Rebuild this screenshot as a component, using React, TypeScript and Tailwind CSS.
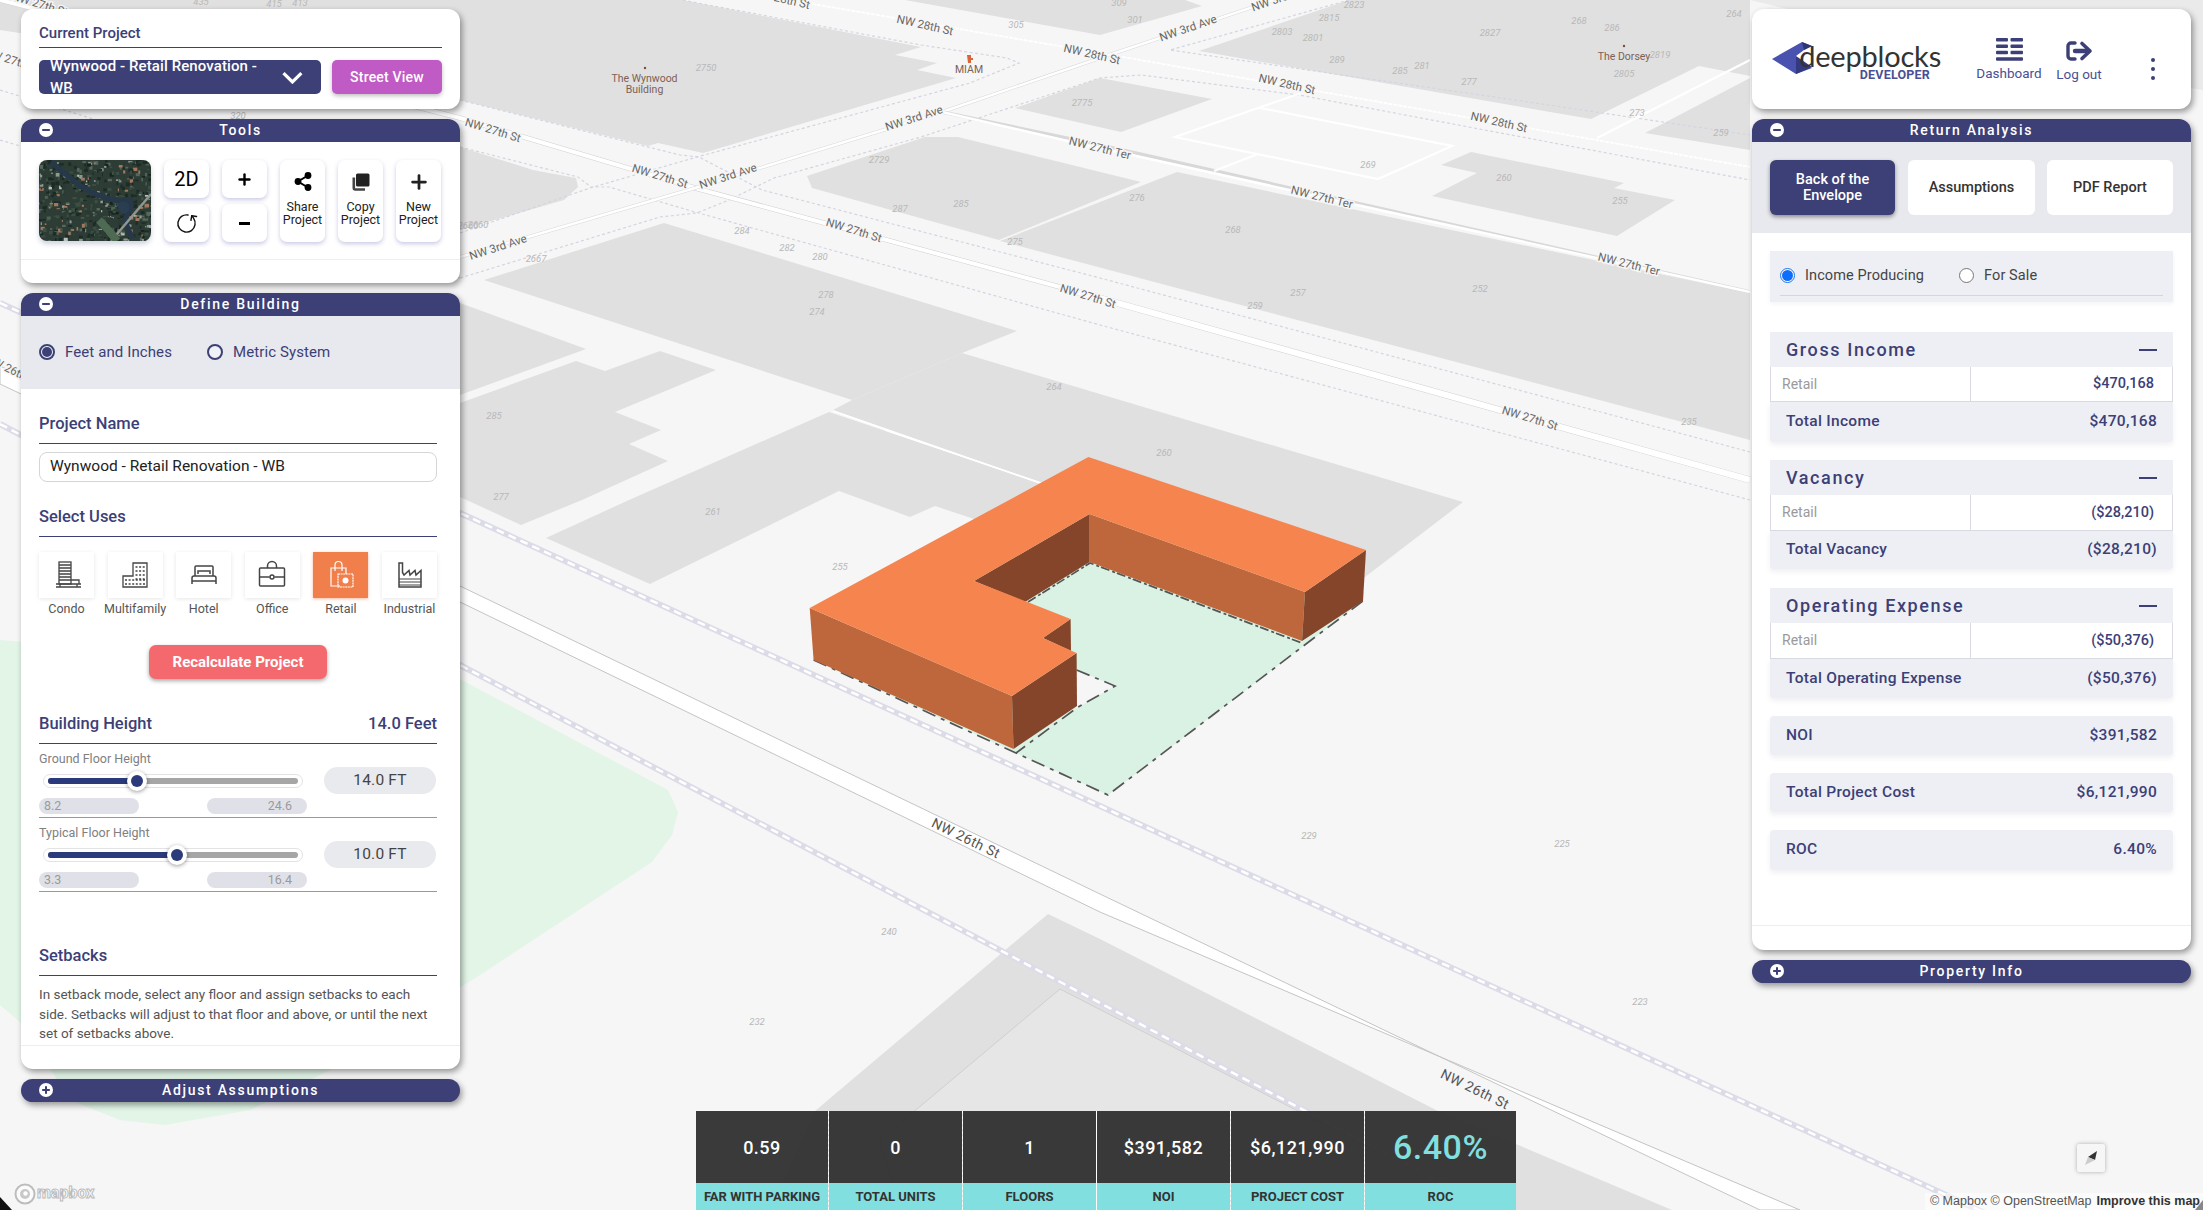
import React from "react";
import { RotateCw, Plus } from "lucide-react";

const NAVY = "#3c4076";

type Lbl = [string, number, number, number];
const streets: Lbl[] = [
  ["NW 27th St", 493, 130, 17], ["NW 27th St", 660, 176, 17], ["NW 3rd Ave", 728, 176, -18], ["NW 3rd Ave", 914, 118, -18],
  ["NW 3rd Ave", 498, 247, -18], ["NW 28th St", 925, 25, 13], ["NW 28th St", 1092, 54, 13], ["28th St", 792, 1, 13],
  ["NW 27th Ter", 1100, 148, 14], ["NW 27th St", 854, 230, 17], ["NW 27th St", 1088, 296, 17], ["NW 28th St", 1287, 84, 13],
  ["NW 28th St", 1499, 122, 13], ["NW 27th Ter", 1322, 197, 14], ["NW 27th Ter", 1629, 264, 14], ["NW 27th St", 1530, 418, 17],
  ["NW 3rd Ave", 1188, 28, -19], ["NW 3rd Ave", 1280, -2, -19], ["NW 27th St", 12, 60, 17],["NW 26th St", 12, 370, 26], ["NW 27th St", 40, 4, 17],
];
const wide: Lbl[] = [["NW 26th St", 966, 838, 26], ["NW 26th St", 1475, 1089, 26]];
const nums: [string, number, number][] = [
  ["2750", 706, 68], ["305", 1016, 25], ["2775", 1082, 103], ["2729", 879, 160], ["287", 900, 209], ["285", 961, 204], ["275", 1015, 242],
  ["284", 742, 231], ["282", 787, 248], ["280", 820, 257], ["2667", 536, 259], ["2660", 468, 226], ["278", 826, 295], ["274", 817, 312],
  ["264", 1054, 387], ["285", 494, 416], ["277", 501, 497], ["309", 1119, 3], ["301", 1135, 20], ["2823", 1354, 5], ["2815", 1329, 18],
  ["2803", 1282, 32], ["2801", 1313, 38], ["289", 1337, 60], ["285", 1400, 71], ["281", 1422, 66], ["277", 1469, 82], ["2827", 1490, 33],
  ["268", 1579, 21], ["286", 1612, 28], ["264", 1734, 14], ["2819", 1660, 55], ["2805", 1624, 74], ["273", 1637, 113], ["259", 1721, 133],
  ["269", 1368, 165], ["260", 1504, 178], ["255", 1620, 201], ["276", 1137, 198], ["268", 1233, 230], ["257", 1298, 293], ["259", 1255, 306],
  ["252", 1480, 289], ["235", 1689, 422], ["260", 1164, 453], ["261", 713, 512], ["255", 840, 567], ["240", 889, 932], ["232", 757, 1022],
  ["229", 1309, 836], ["225", 1562, 844], ["223", 1640, 1002], ["415", 274, 4], ["413", 300, 3], ["435", 201, 2], ["320", 238, 116], ["2660", 478, 225],
];
const blocks = [
  "0,0 617,0 682,0 921,47 895,55 937,63 917,70 956,78 703,153 658,143 648,146 460,100 0,30",
  "300,160 460,147 533,170 576,178 578,187 564,200 460,230 300,280",
  "484,280 664,223 1017,331 962,353 852,400",
  "807,176 925,137 958,137 1141,182 999,240 812,188",
  "1000,241 1177,172 1750,293 1750,440",
  "1015,108 1100,78 1212,99 1121,132",
  "905,0 1185,0 1202,6 1100,35",
  "1349,0 1199,51 1591,119 1699,66 1750,76 1750,0",
  "1645,133 1750,78 1750,150",
  "1471,152 1624,183 1614,188 1675,200 1617,236 1432,196 1477,173 1441,165",
  "460,303 586,349 460,395",
  "460,403 576,361 605,371 660,351 716,370 615,412 661,430 629,444 668,461 582,500 521,525 460,497",
  "629,500 829,412 1040,483 1100,520 974,519 935,506 910,517 839,491 650,584 546,538",
  "962,353 1463,502 1365,577 1200,560 1041,483 833,410 852,400",
  "1048,914 1100,939 1438,1111 1672,1210 770,1210 815,1111",
];
const thin = [
  "460,100 680,155 699,157 762,190 1100,278 1750,452",
  "460,147 578,177 591,187 609,187 695,212 1100,325 1750,500",
  "460,233 590,188 697,157 970,83 1019,63 1007,58 921,45 682,0",
  "460,278 660,217 697,213 729,200 774,178 921,137 1100,78 1141,75 1299,95 1750,180",
  "1349,0 1170,50 1515,100 1750,135",
  "0,90 460,233","0,140 460,278",
];

function MapBg() {
  return (
    <svg className="absolute inset-0" width="2203" height="1210" viewBox="0 0 2203 1210">
      <rect width="2203" height="1210" fill="#f6f6f6" />
      <polygon points="0,640 460,679 668,790 678,812 672,835 652,862 480,975 330,1070 250,1110 165,1125 120,1120 70,1100 20,1022 0,1005" fill="#e2f5e7" />
      {blocks.map((p, i) => <polygon key={i} points={p} fill="#e0e0e0" />)}
      <polygon points="1060,989 1444,1186 1470,1210 900,1210 880,1140" fill="#e6e6e6" stroke="#cfcfcf" strokeWidth="1" />
      <polygon points="1750,0 2203,0 2203,90 2000,60" fill="#eaeaea" />
      <polygon points="2191,440 2203,445 2203,900 2191,900" fill="#f6f6f6" />
      <polyline points="0,370 460,586 1100,894 1760,1210" fill="none" stroke="#c8c8c8" strokeWidth="0" />
      <polygon points="0,366 460,586 1100,894 1760,1210 1800,1210 1100,912 460,602 0,384" fill="#ffffff" stroke="#c4c4c4" strokeWidth="1" />
      {thin.map((p, i) => <polyline key={i} points={p} fill="none" stroke="#d4d4e2" strokeWidth="1.2" strokeDasharray="3 2.5" />)}
      <g fill="none" stroke="#ffffff" strokeLinecap="butt">
        <polyline points="0,0 460,118 695,188 1060,287" stroke="#d0d0d0" strokeWidth="5" />
        <polyline points="1060,287 1750,480" stroke="#d0d0d0" strokeWidth="7" />
        <polyline points="0,0 460,118 695,188 1060,287" strokeWidth="4" />
        <polyline points="1060,287 1750,480" strokeWidth="6" />
        <polyline points="460,257 695,188 942,112 1100,58 1274,0" stroke="#d8d8d8" strokeWidth="3.5" />
        <polyline points="460,257 695,188 942,112 1100,58 1274,0" strokeWidth="2.5" />
        <polyline points="942,112 1100,145 1750,292" stroke="#d8d8d8" strokeWidth="3.5" />
        <polyline points="942,112 1072,142 1100,148 1750,292" strokeWidth="2.5" />
        <polyline points="807,3 1100,53 1750,167" strokeWidth="1.8" strokeDasharray="4 1" />
        <polyline points="1301,93 1175,137 1378,179 1452,146 1260,108" strokeWidth="2.2" />
        <line x1="1258" y1="154" x2="1214" y2="171" strokeWidth="2.2" />
        <line x1="1597" y1="138" x2="1750" y2="60" strokeWidth="2.2" />
        <line x1="885" y1="430" x2="1041" y2="483" strokeWidth="1.5" />
        <line x1="833" y1="411" x2="1040" y2="483" strokeWidth="1.5" />
      </g>
      <polyline points="0,303 460,513 1100,806 1750,1105 2203,1313" fill="none" stroke="#dcdce8" strokeWidth="6" />
      <polyline points="0,303 460,513 1100,806 1750,1105 2203,1313" fill="none" stroke="#ffffff" strokeWidth="2.5" strokeDasharray="8 5" />
      <polyline points="0,424 460,665 1100,1003 1444,1184 1490,1210" fill="none" stroke="#dcdce8" strokeWidth="6" />
      <polyline points="0,424 460,665 1100,1003 1444,1184 1490,1210" fill="none" stroke="#ffffff" strokeWidth="2.5" strokeDasharray="8 5" />
      {nums.map(([t, x, y], i) => (
        <text key={i} x={x} y={y + 3} textAnchor="middle" fontFamily="Roboto, sans-serif" fontStyle="italic" fontSize="9.5" fill="#b8b8b8">{t}</text>
      ))}
      {streets.map(([t, x, y, r], i) => (
        <text key={i} transform={`translate(${x} ${y}) rotate(${r})`} y="4" textAnchor="middle" fontFamily="Roboto, sans-serif" fontSize="11.5" fill="#666" stroke="#f6f6f6" strokeWidth="3" paintOrder="stroke">{t}</text>
      ))}
      {wide.map(([t, x, y, r], i) => (
        <text key={i} transform={`translate(${x} ${y}) rotate(${r})`} y="5" textAnchor="middle" fontFamily="Roboto, sans-serif" fontSize="14" letterSpacing="0.4" fill="#555">{t}</text>
      ))}
      <g fontFamily="Roboto, sans-serif" fontSize="10.5" fill="#7d5f55" textAnchor="middle">
        <text x="644.5" y="82">The Wynwood</text>
        <text x="644.5" y="93">Building</text>
        <text x="969" y="73">MIAM</text>
        <text x="1624" y="60">The Dorsey</text>
      </g>
      <circle cx="645" cy="68" r="1.2" fill="#7d4a38" />
      <circle cx="1624" cy="46" r="1.2" fill="#7d4a38" />
      <path d="M967 55h4v3h2v2h-2v3h-3z" fill="#d8663a" />

      <polygon points="813.6,660 1108,795 1363,601 1088,470" fill="#d9f2e3" />
      <polygon points="1076.6,670 1115,686 1076.6,708 1040,690" fill="#f6f6f6" />
      <g fill="none" stroke="#555" strokeWidth="1.7" strokeDasharray="14 6 4 6">
        <polyline points="813.6,660 1016,753 1108,795 1302,647 1363,601" />
        <polyline points="1076.6,670 1115,686 1076.6,708 1016,753" />
        <polyline points="1028,602 1090,563 1302,643" strokeDasharray="9 3 3 2" />
      </g>
      <polygon points="1089.6,514 1305,592 1302,641 1089.6,562" fill="#bf673c" />
      <polygon points="974,581 1089.6,514 1089.6,562 1025,602" fill="#85452a" />
      <polygon points="1043,638 1070.6,619 1071,651" fill="#85452a" />
      <polygon points="1305,592 1366,550 1363,601 1302,641" fill="#85452a" />
      <polygon points="809.7,608 1012,696 1013.5,749 813.6,660" fill="#bf673c" />
      <polygon points="1012,696 1076.6,653 1077,706 1013.5,749" fill="#85452a" />
      <polygon points="1088.4,457 1366,550 1305,592 1089.6,514 974,581 1070.6,619 1043,638 1076.6,653 1012,696 809.7,608" fill="#f5844f" />

      <polygon points="0,1197 12,1210 0,1210" fill="#111" />
      <polygon points="2203,1200 2195,1210 2203,1210" fill="#111" />
    </svg>
  );
}

function HeaderBar({ title, open = true, rounded = false }: { title: string; open?: boolean; rounded?: boolean }) {
  return (
    <div className={`relative h-[23px] bg-[#3c4076] flex items-center justify-center ${rounded ? "rounded-[12px] shadow-[2px_3px_6px_rgba(0,0,0,0.4)]" : "rounded-t-[12px]"}`}>
      <svg className="absolute left-[18px] top-[4px]" width="14" height="14" viewBox="0 0 14 14">
        <circle cx="7" cy="7" r="7" fill="#fff" />
        <rect x="3.2" y="6" width="7.6" height="2" fill={NAVY} />
        {!open && <rect x="6" y="3.2" width="2" height="7.6" fill={NAVY} />}
      </svg>
      <span className="text-white text-[14px] font-medium tracking-[1.7px]">{title}</span>
    </div>
  );
}

function Radio({ on, label, color = "navy" }: { on: boolean; label: string; color?: string }) {
  if (color === "blue") {
    return (
      <div className="flex items-center gap-[10px]">
        <div className={`w-[15px] h-[15px] rounded-full border flex items-center justify-center bg-white ${on ? "border-[#1a73e8]" : "border-[#777]"}`}>
          {on && <div className="w-[11px] h-[11px] rounded-full bg-[#0d6efd]" />}
        </div>
        <span className="text-[14.5px] text-[#444] tracking-[0.1px]">{label}</span>
      </div>
    );
  }
  return (
    <div className="flex items-center gap-[10px]">
      <div className="w-[16px] h-[16px] rounded-full border-2 border-[#3c4076] flex items-center justify-center bg-white/40">
        {on && <div className="w-[10px] h-[10px] rounded-full bg-[#3c4076]" />}
      </div>
      <span className="text-[15px] text-[#3c4076] tracking-[0.1px]">{label}</span>
    </div>
  );
}

function SectionTitle({ left, right, mt }: { left: string; right?: string; mt: string }) {
  return (
    <div className={`${mt} h-[31px] flex justify-between border-b border-[#3c4076] text-[16.5px] leading-[22px] font-medium text-[#3c4076]`}>
      <span>{left}</span>
      {right && <span>{right}</span>}
    </div>
  );
}

function Satellite() {
  const rects: React.ReactNode[] = [];
  let s = 7;
  const rnd = () => { s = (s * 16807) % 2147483647; return s / 2147483647; };
  const cols = ["#1d2b26", "#3b4f43", "#56685c", "#2a3a33", "#8c9a93", "#a3785f", "#16221f", "#4c6350", "#b9c0bd"];
  for (let i = 0; i < 520; i++) {
    const c = cols[Math.floor(rnd() * rnd() * cols.length * 1.3) % cols.length];
    rects.push(<rect key={i} x={rnd() * 112} y={rnd() * 81} width={1 + rnd() * 3.5} height={1 + rnd() * 3} fill={c} />);
  }
  return (
    <svg width="112" height="81" viewBox="0 0 112 81" className="rounded-[8px] shrink-0 shadow-[0_3px_5px_rgba(70,70,140,0.25)]">
      <rect width="112" height="81" fill="#2d3d36" />
      {rects}
      <path d="M12 2C24 12 34 22 48 30C62 38 76 40 84 42C88 38 94 40 92 48C86 56 84 62 94 78" fill="none" stroke="#26384a" strokeWidth="5" />
      <path d="M78 44C84 40 92 42 90 50C86 56 80 54 78 44Z" fill="#2a3e52" />
      <path d="M72 81L112 34" stroke="#8f958f" strokeWidth="2.5" />
      <path d="M60 60Q70 70 78 81" stroke="#4e6a52" strokeWidth="8" fill="none" />
    </svg>
  );
}

function ToolBtn({ className = "", children }: { className?: string; children: React.ReactNode }) {
  return <div className={`w-[45px] bg-white rounded-[7px] shadow-[0_2px_4px_rgba(80,80,170,0.3)] flex flex-col items-center ${className}`}>{children}</div>;
}

const cap = "text-[12.5px] leading-[13px] text-[#222] text-center font-normal";

function UseIcon({ n, active }: { n: string; active?: boolean }) {
  const c = active ? "#fff" : "#444";
  const p = { fill: "none", stroke: c, strokeWidth: 1.3 };
  return (
    <svg width="30" height="30" viewBox="0 0 30 30">
      {n === "condo" && <g {...p}>
        <rect x="7" y="2" width="12" height="22" />
        <path d="M7 5h12M7 8h12M7 11h12M7 14h12M7 17h12M7 20h12M4 24h25M19 20h8v4M4 27h25M8 24v3M25 24v3" />
      </g>}
      {n === "multi" && <g {...p}>
        <path d="M3 27V16H13V3H27V27Z" />
        <path strokeDasharray="2 1.6" strokeWidth="1.6" d="M15.5 7h10M15.5 11h10M15.5 15h10M15.5 19h10M5 20h20M5 24h20" />
      </g>}
      {n === "hotel" && <g {...p} strokeWidth="1.5">
        <path d="M6 16V7a1 1 0 0 1 1-1h16a1 1 0 0 1 1 1v9" />
        <path d="M9 14v-3h12v3M3 24v-6a2 2 0 0 1 2-2h20a2 2 0 0 1 2 2v6M3 21h24" />
      </g>}
      {n === "office" && <g {...p} strokeWidth="1.5">
        <rect x="2.5" y="8" width="25" height="18" rx="1" />
        <path d="M10.5 8V6a4.5 4.5 0 0 1 9 0v2M2.5 17h10M17.5 17h10" />
        <circle cx="15" cy="17" r="2" />
      </g>}
      {n === "retail" && <g {...p} strokeWidth="1.2">
        <path d="M14 26H5V8h15v6" />
        <path d="M9 11V5a3.5 3.5 0 0 1 7 0v6" />
        <rect x="12" y="14" width="15" height="13" strokeDasharray="2 .6" />
        <circle cx="19.5" cy="20.5" r="2.4" fill="#fff" />
      </g>}
      {n === "ind" && <g {...p} strokeWidth="1.5">
        <path d="M5 3V27H27V10.500L22 15L21 10.500L16 15L15 10.500L10 15L8.500 12.500V3Z" />
        <path d="M5 19h22M5 22h22M5 25h22" strokeWidth="1.1" />
      </g>}
    </svg>
  );
}

function UseTile({ n, label, active }: { n: string; label: string; active?: boolean }) {
  return (
    <div className="w-[55px] flex flex-col items-center">
      <div className={`w-[55px] h-[46px] flex items-center justify-center ${active ? "bg-[#f17f4b] shadow-[0_1px_3px_rgba(240,120,70,0.5)]" : "bg-white shadow-[0_1px_4px_rgba(0,0,0,0.1)]"}`}>
        <UseIcon n={n} active={active} />
      </div>
      <span className="mt-[3px] h-[16px] leading-[16px] text-[12.5px] text-[#555] whitespace-nowrap">{label}</span>
    </div>
  );
}

function SliderGroup({ label, fill, thumb, val, min, max, mt }: { label: string; fill: string; thumb: string; val: string; min: string; max: string; mt: string }) {
  return (
    <div className={`${mt} border-b border-[#999] pb-[3px]`}>
      <div className="h-[16px] leading-[16px] text-[12.5px] text-[#808080]">{label}</div>
      <div className="h-[27px] flex items-center">
        <div className="relative ml-[4px] w-[260px] h-[14px] rounded-full bg-white border border-[#e3e3e3] flex items-center px-[4px]">
          <div className="w-full h-[6px] rounded-full bg-[#a6a6a6] flex">
            <div className={`${fill} h-[6px] rounded-full bg-[#2b3a7a]`} />
          </div>
          <div className={`absolute ${thumb} top-[-4px] w-[20px] h-[20px] rounded-full bg-white shadow-[0_1px_4px_rgba(0,0,0,0.4)] flex items-center justify-center`}>
            <div className="w-[12px] h-[12px] rounded-full bg-[#2b3a7a]" />
          </div>
        </div>
        <div className="ml-[21px] w-[112px] h-[27px] rounded-full bg-[#e9eaee] flex items-center justify-center text-[15.5px] text-[#444] tracking-[0.2px]">{val}</div>
      </div>
      <div className="mt-[4px] flex text-[12.5px] text-[#9a9a9a]">
        <div className="w-[100px] h-[16px] leading-[16px] rounded-full bg-[#e0e1e8] pl-[5px]">{min}</div>
        <div className="ml-[68px] w-[100px] h-[16px] leading-[16px] rounded-full bg-[#e0e1e8] pr-[15px] text-right">{max}</div>
      </div>
    </div>
  );
}

function LeftColumn() {
  return (
    <div className="w-[439px] flex flex-col gap-[10px]">
      <div className="h-[100px] bg-white rounded-[12px] shadow-[2px_3px_6px_rgba(0,0,0,0.4)] px-[18px] pt-[12px]">
        <div className="h-[27px] border-b border-[#3c4076] text-[15px] leading-[24px] font-medium text-[#3c4076]">Current Project</div>
        <div className="mt-[12px] flex gap-[11px]">
          <div className="w-[282px] h-[34px] rounded-[5px] bg-[#3c4076] flex items-center justify-between pl-[11px] pr-[18px]">
            <span className="text-white text-[15px] font-medium tracking-[0.1px]">Wynwood - Retail Renovation - WB</span>
            <svg width="21" height="13" viewBox="0 0 21 13"><polyline points="1.500,2 10.500,11 19.500,2" fill="none" stroke="#fff" strokeWidth="3.200" /></svg>
          </div>
          <div className="w-[110px] h-[34px] rounded-[5px] bg-[#c05ac4] shadow-[0_2px_4px_rgba(0,0,0,0.25)] flex items-center justify-center text-white text-[14px] font-medium tracking-[0.2px]">Street View</div>
        </div>
      </div>

      <div className="rounded-[12px] shadow-[2px_3px_6px_rgba(0,0,0,0.4)] bg-white">
        <HeaderBar title="Tools" />
        <div className="h-[141px] flex flex-col">
          <div className="pt-[18px] pl-[18px] flex">
            <Satellite />
            <div className="ml-[13px] flex flex-col gap-[6px]">
              <ToolBtn className="h-[38px] justify-center text-[20px] text-black">2D</ToolBtn>
              <ToolBtn className="h-[38px] justify-center"><RotateCw size={23} strokeWidth={1.5} color="#111" className="-scale-x-100 rotate-[100deg]" /></ToolBtn>
            </div>
            <div className="ml-[13px] flex flex-col gap-[6px]">
              <ToolBtn className="h-[38px] justify-center"><Plus size={17} strokeWidth={3.4} color="#000" /></ToolBtn>
              <ToolBtn className="h-[38px] justify-center"><div className="w-[11px] h-[3px] bg-black" /></ToolBtn>
            </div>
            <ToolBtn className="ml-[13px] h-[82px] pt-[12px]">
              <svg width="18" height="19" viewBox="0 0 18 19" className="mb-[9px]">
                <path d="M14 3.500L4 9.500L14 15.500" fill="none" stroke="#000" strokeWidth="2" />
                <circle cx="14" cy="3.500" r="3.400" /><circle cx="4" cy="9.500" r="3.400" /><circle cx="14" cy="15.500" r="3.400" />
              </svg>
              <span className={cap}>Share<br />Project</span>
            </ToolBtn>
            <ToolBtn className="ml-[13px] h-[82px] pt-[13px]">
              <svg width="19" height="18" viewBox="0 0 19 18" className="mb-[9px]">
                <rect x="5" y="0.500" width="13.500" height="13" rx="1.500" fill="#222" />
                <path d="M2.800 4.500V15a1.500 1.500 0 0 0 1.500 1.500H14" fill="none" stroke="#444" strokeWidth="2.600" />
              </svg>
              <span className={cap}>Copy<br />Project</span>
            </ToolBtn>
            <ToolBtn className="ml-[13px] h-[82px] pt-[12px]">
              <div className="h-[19px] mb-[9px] flex items-center"><Plus size={22} strokeWidth={3} color="#222" /></div>
              <span className={cap}>New<br />Project</span>
            </ToolBtn>
          </div>
          <div className="mt-[17px] border-t border-[#eeeeee]" />
        </div>
      </div>

      <div className="rounded-[12px] shadow-[2px_3px_6px_rgba(0,0,0,0.4)] bg-white">
        <HeaderBar title="Define Building" />
        <div className="h-[73px] bg-[#e8e9ee] flex items-center pl-[18px] pb-[1px]">
          <Radio on label="Feet and Inches" />
          <div className="ml-[35px]"><Radio on={false} label="Metric System" /></div>
        </div>
        <div className="h-[680px] flex flex-col">
          <div className="h-[656px] overflow-hidden pl-[18px] pr-[23px]">
            <SectionTitle left="Project Name" mt="mt-[24px]" />
            <div className="mt-[8px] h-[30px] rounded-[8px] border border-[#d5d5d5] flex items-center pl-[10px] text-[15.5px] text-[#222]">Wynwood - Retail Renovation - WB</div>
            <SectionTitle left="Select Uses" mt="mt-[24px]" />
            <div className="mt-[15px] flex justify-between">
              <UseTile n="condo" label="Condo" />
              <UseTile n="multi" label="Multifamily" />
              <UseTile n="hotel" label="Hotel" />
              <UseTile n="office" label="Office" />
              <UseTile n="retail" label="Retail" active />
              <UseTile n="ind" label="Industrial" />
            </div>
            <div className="mt-[28px] mx-auto w-[178px] h-[34px] rounded-[7px] bg-[#f4696e] shadow-[0_2px_4px_rgba(0,0,0,0.35)] flex items-center justify-center text-white text-[15px] font-bold">Recalculate Project</div>
            <SectionTitle left="Building Height" right="14.0 Feet" mt="mt-[34px]" />
            <SliderGroup label="Ground Floor Height" fill="w-[88px]" thumb="left-[83px]" val="14.0 FT" min="8.2" max="24.6" mt="mt-[7px]" />
            <SliderGroup label="Typical Floor Height" fill="w-[128px]" thumb="left-[123px]" val="10.0 FT" min="3.3" max="16.4" mt="mt-[7px]" />
            <SectionTitle left="Setbacks" mt="mt-[53px]" />
            <p className="mt-[9px] text-[13.5px] leading-[19.5px] text-[#555]">In setback mode, select any floor and assign setbacks to each side. Setbacks will adjust to that floor and above, or until the next set of setbacks above.</p>
          </div>
          <div className="border-t border-[#eeeeee]" />
        </div>
      </div>

      <HeaderBar title="Adjust Assumptions" open={false} rounded />
    </div>
  );
}

function Section({ title, hh, rh, th, rowVal, totalLabel, totalVal, mt }: { title: string; hh: string; rh: string; th: string; rowVal: string; totalLabel: string; totalVal: string; mt: string }) {
  return (
    <div className={`${mt} mx-[18px]`}>
      <div className={`${hh} bg-[#eeeff4] flex items-center justify-between pl-[16px] pr-[16px]`}>
        <span className="text-[18px] font-medium tracking-[1.6px] text-[#3c4076]">{title}</span>
        <div className="w-[18px] h-[2px] bg-[#3c4076]" />
      </div>
      <div className={`${rh} flex border-x border-b border-[#d9dae3] bg-white`}>
        <div className="w-[200px] border-r border-[#d9dae3] flex items-center pl-[11px] text-[14px] text-[#9a9a9a]">Retail</div>
        <div className="flex-1 flex items-center justify-end pr-[18px] text-[14.5px] font-medium text-[#3c4076]">{rowVal}</div>
      </div>
      <Total label={totalLabel} val={totalVal} h={th} />
    </div>
  );
}

function Total({ label, val, h }: { label: string; val: string; h: string }) {
  return (
    <div className={`${h} bg-[#eeeff4] rounded-b-[4px] shadow-[0_3px_5px_rgba(60,60,120,0.08)] flex items-center justify-between px-[16px] text-[15.5px] font-medium tracking-[0.3px] text-[#3c4076]`}>
      <span>{label}</span><span>{val}</span>
    </div>
  );
}

function RightColumn() {
  return (
    <div className="w-[439px] flex flex-col gap-[10px]">
      <div className="h-[100px] bg-white rounded-[12px] shadow-[2px_3px_6px_rgba(0,0,0,0.4)] flex items-start pl-[20px] pt-[30px]">
        <svg width="40" height="34" viewBox="0 0 40 34" className="mt-[2px]">
          <polygon points="0,18 30,1 40,5 32,9 24,15 24,20 40,27 24,33" fill="#4a52b0" />
          <polygon points="24,15 40,26 24,33" fill="#333a80" />
          <polygon points="30,1 40,5 32,9" fill="#2f3570" />
        </svg>
        <div className="ml-[7px] w-[122px] flex flex-col items-end">
          <span className="text-[29px] leading-[34px] text-[#333] font-[Lato,sans-serif] tracking-[-0.2px] whitespace-nowrap">deepblocks</span>
          <span className="-mt-[5px] mr-[11px] text-[12.5px] leading-[14px] font-bold tracking-[0.2px] text-[#4a4f95]">DEVELOPER</span>
        </div>
        <div className="ml-[39px] -mt-[1px] w-[58px] flex flex-col items-center">
          <svg width="27" height="23" viewBox="0 0 27 23" fill={NAVY}>
            <rect x="0" y="0" width="12" height="3.500" rx="1" /><rect x="14.500" y="0" width="12.500" height="3.500" rx="1" />
            <rect x="0" y="6.400" width="12" height="3.500" rx="1" /><rect x="14.500" y="6.400" width="12.500" height="3.500" rx="1" />
            <rect x="0" y="12.800" width="12" height="3.500" rx="1" /><rect x="14.500" y="12.800" width="12.500" height="3.500" rx="1" />
            <rect x="0" y="19.200" width="27" height="3.500" rx="1" />
          </svg>
          <span className="mt-[4px] text-[13.5px] leading-[16px] text-[#4a4f95] whitespace-nowrap">Dashboard</span>
        </div>
        <div className="ml-[21px] w-[40px] flex flex-col items-center">
          <svg width="27" height="23" viewBox="0 0 27 23" className="mt-[1px]" fill="none" stroke={NAVY}>
            <path d="M9 3H5A3 3 0 0 0 2 6V16A3 3 0 0 0 5 19H9" strokeWidth="3.400" strokeLinecap="round" />
            <path d="M9 11H21" strokeWidth="4.400" strokeLinecap="round" />
            <path d="M16 3.500L24 11L16 18.500" strokeWidth="3.600" strokeLinecap="round" strokeLinejoin="round" />
          </svg>
          <span className="mt-[3px] text-[13.5px] leading-[16px] text-[#4a4f95] whitespace-nowrap">Log out</span>
        </div>
        <div className="ml-[52px] mt-[19px] flex flex-col gap-[5px]">
          <div className="w-[4px] h-[4px] rounded-full bg-[#3c4076]" />
          <div className="w-[4px] h-[4px] rounded-full bg-[#3c4076]" />
          <div className="w-[4px] h-[4px] rounded-full bg-[#3c4076]" />
        </div>
      </div>

      <div className="rounded-[12px] shadow-[2px_3px_6px_rgba(0,0,0,0.4)] bg-white">
        <HeaderBar title="Return Analysis" />
        <div className="h-[91px] bg-[#e8e9ee] flex pt-[18px] pl-[18px]">
          <div className="w-[125px] h-[55px] rounded-[6px] bg-[#3c4076] shadow-[0_2px_4px_rgba(0,0,0,0.4)] flex items-center justify-center text-center text-white text-[14.5px] leading-[16px] font-medium">Back of the<br />Envelope</div>
          <div className="ml-[13px] w-[127px] h-[55px] rounded-[6px] bg-white flex items-center justify-center text-[14.5px] font-medium text-[#333]">Assumptions</div>
          <div className="ml-[12px] w-[126px] h-[55px] rounded-[6px] bg-white flex items-center justify-center text-[14.5px] font-medium text-[#333]">PDF Report</div>
        </div>
        <div className="h-[717px] flex flex-col">
          <div className="mt-[18px] mx-[18px] h-[51px] bg-[#eeeff4] px-[10px] pt-[14px] shadow-[0_2px_4px_rgba(60,60,120,0.06)]">
            <div className="h-[31px] border-b border-[#d5d5dd] flex items-start">
              <Radio on label="Income Producing" color="blue" />
              <div className="ml-[35px]"><Radio on={false} label="For Sale" color="blue" /></div>
            </div>
          </div>
          <Section mt="mt-[30px]" title="Gross Income" hh="h-[35px]" rh="h-[35px]" th="h-[40px]" rowVal="$470,168" totalLabel="Total Income" totalVal="$470,168" />
          <Section mt="mt-[18px]" title="Vacancy" hh="h-[35px]" rh="h-[36px]" th="h-[38px]" rowVal="($28,210)" totalLabel="Total Vacancy" totalVal="($28,210)" />
          <Section mt="mt-[19px]" title="Operating Expense" hh="h-[35px]" rh="h-[36px]" th="h-[39px]" rowVal="($50,376)" totalLabel="Total Operating Expense" totalVal="($50,376)" />
          <div className="mt-[18px] mx-[18px]"><Total label="NOI" val="$391,582" h="h-[39px] rounded-t-[4px]" /></div>
          <div className="mt-[18px] mx-[18px]"><Total label="Total Project Cost" val="$6,121,990" h="h-[39px] rounded-t-[4px]" /></div>
          <div className="mt-[18px] mx-[18px]"><Total label="ROC" val="6.40%" h="h-[40px] rounded-t-[4px]" /></div>
          <div className="mt-auto mb-[24px] border-t border-[#eeeeee]" />
        </div>
      </div>

      <HeaderBar title="Property Info" open={false} rounded />
    </div>
  );
}

function Stat({ v, l, w, last, solid, big }: { v: string; l: string; w: string; last?: boolean; solid?: boolean; big?: boolean }) {
  const border = last ? "" : solid ? "border-r border-white" : "border-r border-dashed border-white/90";
  return (
    <div className={`${w} flex flex-col ${border}`}>
      <div className={`h-[72px] bg-[#2f2f2f]/95 flex items-center justify-center font-medium tracking-[0.5px] ${big ? "text-[34px] text-[#81dfdf]" : "text-[18px] text-white"}`}>{v}</div>
      <div className="h-[27px] bg-[#81dfdf] flex items-center justify-center text-[13px] font-bold text-[#333] whitespace-nowrap">{l}</div>
    </div>
  );
}

export default function App() {
  return (
    <div className="relative w-[2203px] h-[1210px] overflow-hidden bg-[#f6f6f6] font-[Roboto,sans-serif]">
      <MapBg />

      <div className="absolute inset-0 flex justify-between pl-[21px] pr-[12px] pt-[9px] pointer-events-none">
        <LeftColumn />
        <RightColumn />
      </div>

      <div className="absolute left-[696px] bottom-0 w-[820px] flex">
        <Stat v="0.59" l="FAR WITH PARKING" w="w-[133px]" />
        <Stat v="0" l="TOTAL UNITS" w="w-[134px]" />
        <Stat v="1" l="FLOORS" w="w-[134px]" solid />
        <Stat v="$391,582" l="NOI" w="w-[134px]" />
        <Stat v="$6,121,990" l="PROJECT COST" w="w-[134px]" />
        <Stat v="6.40%" l="ROC" w="w-[151px]" last big />
      </div>

      <div className="absolute left-[14px] top-[1183px] flex items-center">
        <svg width="22" height="22" viewBox="0 0 22 22">
          <circle cx="11" cy="11" r="9.500" fill="#fff" fillOpacity="0.6" stroke="#bdbdbd" strokeWidth="2" />
          <circle cx="11" cy="11" r="5" fill="#c8c8c8" />
          <circle cx="11.500" cy="10.500" r="2.200" fill="#fff" />
        </svg>
        <svg width="66" height="22" viewBox="0 0 66 22" className="ml-[1px]">
          <text x="0" y="15" fontFamily="Roboto, sans-serif" fontWeight="700" fontSize="16" fill="#fff" stroke="#bbb" strokeWidth="1">mapbox</text>
        </svg>
      </div>

      <div className="absolute left-[2077px] top-[1144px] w-[28px] h-[28px] rounded-[2px] bg-[#f6f6f6] shadow-[0_0_4px_rgba(0,0,0,0.3)] flex items-center justify-center">
        <svg width="18" height="18" viewBox="0 0 18 18">
          <polygon points="15,2 6,8 13,11" fill="#333" />
          <polygon points="3,16 6,8 13,11" fill="#ccc" />
        </svg>
      </div>

      <div className="absolute right-0 bottom-0 h-[17px] pl-[5px] pr-[3px] bg-white/50 flex items-center gap-[5px] text-[12.500px] text-[#555] font-[Liberation_Sans,sans-serif] whitespace-nowrap">
        <span>© Mapbox © OpenStreetMap</span>
        <span className="font-bold text-[#333]">Improve this map</span>
      </div>
    </div>
  );
}
